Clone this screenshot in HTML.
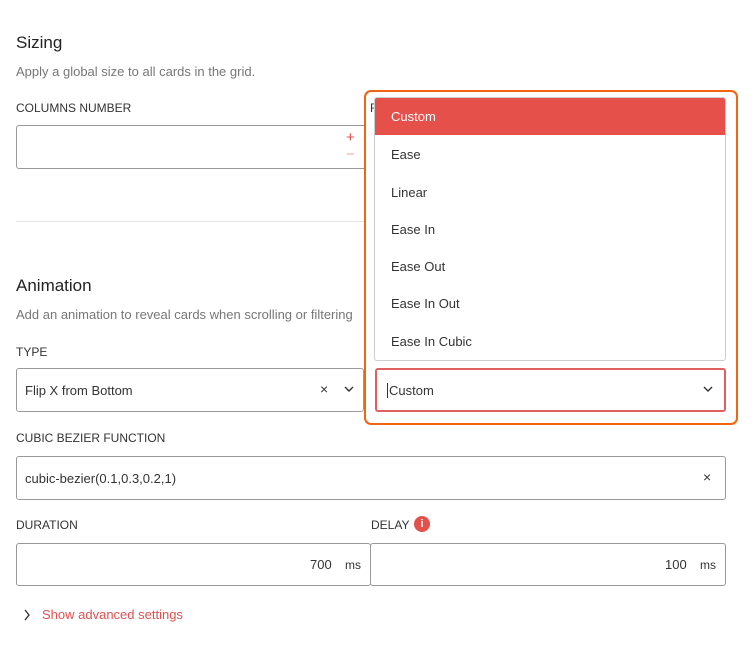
<!DOCTYPE html>
<html><head><style>
*{box-sizing:border-box;margin:0;padding:0}
body{width:754px;height:654px;background:#fff;font-family:"Liberation Sans",sans-serif;color:#333;position:relative;overflow:hidden}
.a{position:absolute}
.t{font-size:17px;color:#222}
.s{font-size:13px;color:#777}
.l{font-size:12px;color:#333}
.box{position:absolute;border:1px solid #999;border-radius:3px;background:#fff}
.it{position:absolute;left:16px;font-size:13px;color:#333}
</style></head><body>
<div class="a t" style="left:16px;top:33px">Sizing</div>
<div class="a s" style="left:16px;top:64px">Apply a global size to all cards in the grid.</div>
<div class="a l" style="left:16px;top:101px">COLUMNS NUMBER</div>
<div class="box" style="left:16px;top:125px;width:356px;height:44px"></div>
<div class="a" style="left:346px;top:129px;color:#e05050;font-size:15px">+</div>
<div class="a" style="left:346px;top:146px;color:#f0a8a8;font-size:15px">−</div>
<div class="box" style="left:370px;top:125px;width:355px;height:44px"></div>
<div class="a" style="left:16px;top:221px;width:354px;height:1px;background:#e3e3e3"></div>
<div class="a t" style="left:16px;top:276px">Animation</div>
<div class="a s" style="left:16px;top:307px">Add an animation to reveal cards when scrolling or filtering</div>
<div class="a l" style="left:16px;top:345px">TYPE</div>
<div class="box" style="left:16px;top:368px;width:348px;height:44px"></div>
<div class="a" style="left:25px;top:383px;font-size:13px">Flip X from Bottom</div>
<div class="a" style="left:320px;top:381px;font-size:14px">×</div>
<svg class="a" style="left:344px;top:385px" width="10" height="8"><path d="M1 2l4 4 4-4" stroke="#333" stroke-width="1.4" fill="none"/></svg>
<div class="a" style="left:364px;top:90px;width:374px;height:335px;border:2px solid #f2640f;border-radius:7px;background:#fff"></div>
<div class="a" style="left:370px;top:101px;font-size:12px">F</div>
<div class="a" style="left:374px;top:97px;width:352px;height:264px;border:1px solid #ccc;border-radius:3px;background:#fff;overflow:hidden">
<div class="a" style="left:0;top:0;width:352px;height:37px;background:#e5504a"></div>
<div class="it" style="top:11px;color:#fff">Custom</div>
<div class="it" style="top:49px">Ease</div>
<div class="it" style="top:87px">Linear</div>
<div class="it" style="top:124px">Ease In</div>
<div class="it" style="top:161px">Ease Out</div>
<div class="it" style="top:198px">Ease In Out</div>
<div class="it" style="top:236px">Ease In Cubic</div>
</div>
<div class="a" style="left:375px;top:368px;width:351px;height:44px;border:2px solid #e06060;border-radius:3px"></div>
<div class="a" style="left:387px;top:383px;font-size:13px;border-left:1px solid #333;padding-left:1px">Custom</div>
<svg class="a" style="left:703px;top:385px" width="10" height="8"><path d="M1 2l4 4 4-4" stroke="#333" stroke-width="1.4" fill="none"/></svg>
<div class="a l" style="left:16px;top:431px">CUBIC BEZIER FUNCTION</div>
<div class="box" style="left:16px;top:456px;width:710px;height:44px"></div>
<div class="a" style="left:25px;top:471px;font-size:13px">cubic-bezier(0.1,0.3,0.2,1)</div>
<div class="a" style="left:703px;top:469px;font-size:14px">×</div>
<div class="a l" style="left:16px;top:518px">DURATION</div>
<div class="a l" style="left:371px;top:518px">DELAY</div>
<div class="a" style="left:414px;top:516px;width:16px;height:16px;border-radius:50%;background:#e5504a;color:#fff;font-size:11px;font-weight:bold;text-align:center;line-height:16px">i</div>
<div class="box" style="left:16px;top:543px;width:355px;height:43px"></div>
<div class="box" style="left:370px;top:543px;width:356px;height:43px"></div>
<div class="a" style="left:310px;top:557px;font-size:13px">700</div>
<div class="a" style="left:345px;top:558px;font-size:12px">ms</div>
<div class="a" style="left:665px;top:557px;font-size:13px">100</div>
<div class="a" style="left:700px;top:558px;font-size:12px">ms</div>
<svg class="a" style="left:23px;top:609px" width="8" height="12"><path d="M2 1l4 5-4 5" stroke="#333" stroke-width="1.4" fill="none"/></svg>
<div class="a" style="left:42px;top:607px;font-size:13px;color:#e05050">Show advanced settings</div>
</body></html>
